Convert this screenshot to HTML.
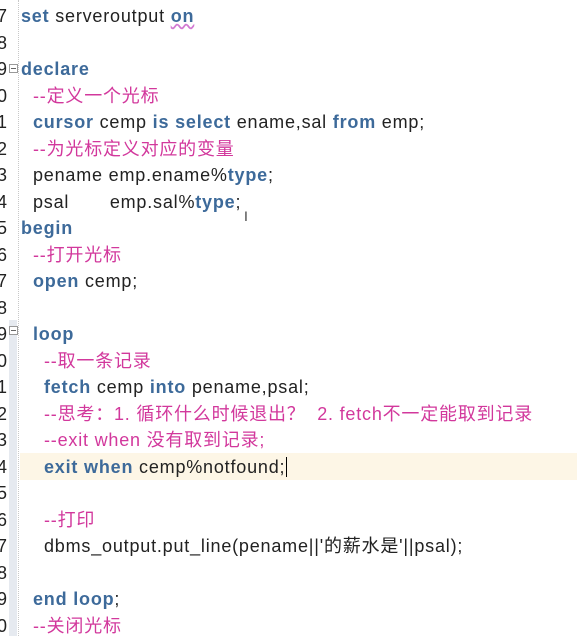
<!DOCTYPE html>
<html><head><meta charset="utf-8"><style>
html,body{margin:0;padding:0;background:#fff;width:577px;height:636px;overflow:hidden}
body{position:relative;font-family:"Liberation Sans","Noto Sans CJK SC",sans-serif;font-size:18px;color:#222}
.num{position:absolute;left:-5px;width:12px;text-align:right;color:#222;font-size:18px}
.fold{position:absolute;left:9px;top:320px;width:8px;height:316px;background:#e6eaf0}
.dot{position:absolute;left:18px;top:0;height:636px;border-left:1px dotted #c8c8c8}
.hl{position:absolute;left:20px;top:453px;width:557px;height:27px;background:#fdf6e6}
.l{position:absolute;white-space:pre;line-height:20px;letter-spacing:0.8px}
.k{color:#3d6a9a;font-weight:bold}
.c{color:#d2389c}
.box{position:absolute;left:9px;width:7px;height:7px;border:1px solid #999;background:#fff;font-size:0}
.box:after{content:"";position:absolute;left:1px;top:3px;width:5px;height:1px;background:#666}
</style></head><body>
<div class="fold"></div>
<div class="dot"></div>
<div class="hl"></div>
<div class="box" style="top:64px"></div>
<div class="box" style="top:326px"></div>
<div class="num" style="top:6px">7</div>
<div class="num" style="top:33px">8</div>
<div class="num" style="top:59px">9</div>
<div class="num" style="top:86px">0</div>
<div class="num" style="top:112px">1</div>
<div class="num" style="top:139px">2</div>
<div class="num" style="top:165px">3</div>
<div class="num" style="top:192px">4</div>
<div class="num" style="top:218px">5</div>
<div class="num" style="top:245px">6</div>
<div class="num" style="top:271px">7</div>
<div class="num" style="top:298px">8</div>
<div class="num" style="top:324px">9</div>
<div class="num" style="top:351px">0</div>
<div class="num" style="top:377px">1</div>
<div class="num" style="top:404px">2</div>
<div class="num" style="top:430px">3</div>
<div class="num" style="top:457px">4</div>
<div class="num" style="top:483px">5</div>
<div class="num" style="top:510px">6</div>
<div class="num" style="top:536px">7</div>
<div class="num" style="top:563px">8</div>
<div class="num" style="top:589px">9</div>
<div class="num" style="top:616px">0</div>

<div class="l" style="left:21px;top:6px"><span class="k">set</span> serveroutput <span class="k" style="text-decoration:underline wavy #d27ad2">on</span></div>
<div class="l" style="left:21px;top:59px"><span class="k">declare</span></div>
<div class="l c" style="left:33px;top:86px">--定义一个光标</div>
<div class="l" style="left:33px;top:112px"><span class="k">cursor</span> cemp <span class="k">is</span> <span class="k">select</span> ename,sal <span class="k">from</span> emp;</div>
<div class="l c" style="left:33px;top:139px">--为光标定义对应的变量</div>
<div class="l" style="left:33px;top:165px">pename emp.ename%<span class="k">type</span>;</div>
<div class="l" style="left:33px;top:192px">psal       emp.sal%<span class="k">type</span>;</div>
<div class="l" style="left:244px;top:206px;font-size:14px;color:#444">I</div>
<div class="l" style="left:21px;top:218px"><span class="k">begin</span></div>
<div class="l c" style="left:33px;top:245px">--打开光标</div>
<div class="l" style="left:33px;top:271px"><span class="k">open</span> cemp;</div>
<div class="l" style="left:33px;top:324px"><span class="k">loop</span></div>
<div class="l c" style="left:44px;top:351px">--取一条记录</div>
<div class="l" style="left:44px;top:377px"><span class="k">fetch</span> cemp <span class="k">into</span> pename,psal;</div>
<div class="l c" style="left:44px;top:404px">--思考：1. 循环什么时候退出？  2. fetch不一定能取到记录</div>
<div class="l c" style="left:44px;top:430px">--exit when 没有取到记录;</div>
<div class="l" style="left:44px;top:457px"><span class="k">exit</span> <span class="k">when</span> cemp%notfound;<span style="border-left:1px solid #000;margin-left:1px"></span></div>
<div class="l c" style="left:44px;top:510px">--打印</div>
<div class="l" style="left:44px;top:536px">dbms_output.put_line(pename||'的薪水是'||psal);</div>
<div class="l" style="left:33px;top:589px"><span class="k">end</span> <span class="k">loop</span>;</div>
<div class="l c" style="left:33px;top:616px">--关闭光标</div>
</body></html>
